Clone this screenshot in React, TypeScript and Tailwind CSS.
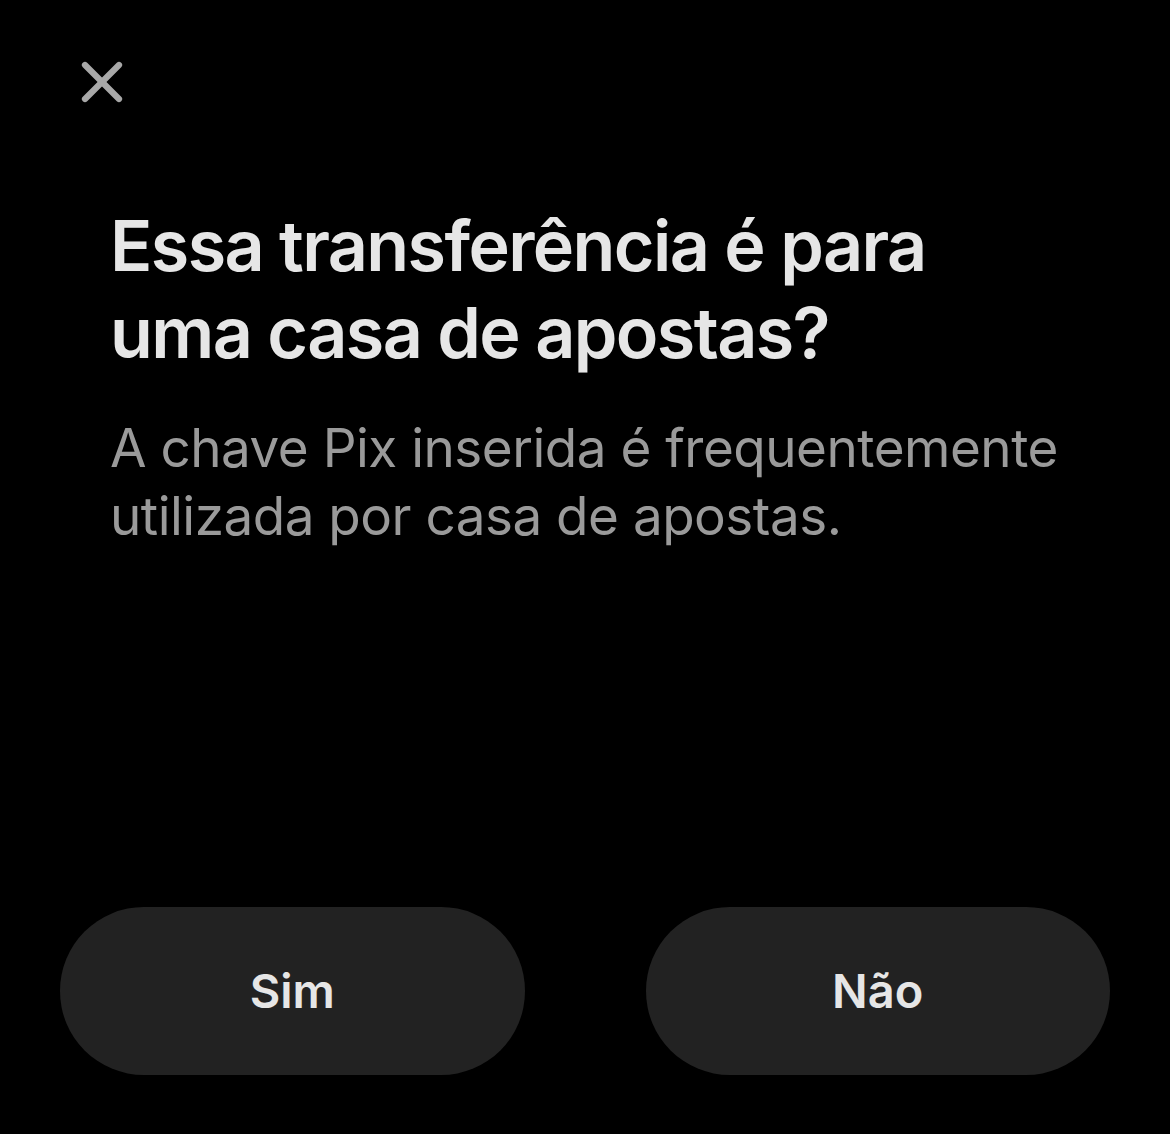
import { X } from 'lucide-react';

export default function App() {
  return (
    <div className="flex h-[1134px] w-[1170px] flex-col bg-black font-['Inter',sans-serif]">
      {/* Close */}
      <div className="flex px-[68px] pt-[48px]">
        <button className="flex h-[68px] w-[68px] items-center justify-center text-[#a8a8a8]">
          <X size={68} strokeWidth={2.2} />
        </button>
      </div>

      {/* Content */}
      <div className="flex flex-col pl-[110px] pr-[50px] pt-[86px]">
        <h1 className="text-[70px] font-semibold leading-[87px] tracking-[-1.6px] text-[#e6e6e6]">
          Essa transferência é para
          <br />
          uma casa de apostas?
        </h1>
        <p className="mt-[38px] text-[53px] font-normal leading-[68px] tracking-[-0.5px] text-[#9a9a9a]">
          A chave Pix inserida é frequentemente utilizada por casa de apostas.
        </p>
      </div>

      {/* Actions */}
      <div className="mt-auto grid grid-cols-2 gap-[121px] px-[60px] pb-[59px]">
        <button className="flex h-[168px] items-center justify-center rounded-full bg-[#222222] text-[47px] font-semibold text-[#e6e6e6]">
          Sim
        </button>
        <button className="flex h-[168px] items-center justify-center rounded-full bg-[#222222] text-[47px] font-semibold text-[#e6e6e6]">
          Não
        </button>
      </div>
    </div>
  );
}
